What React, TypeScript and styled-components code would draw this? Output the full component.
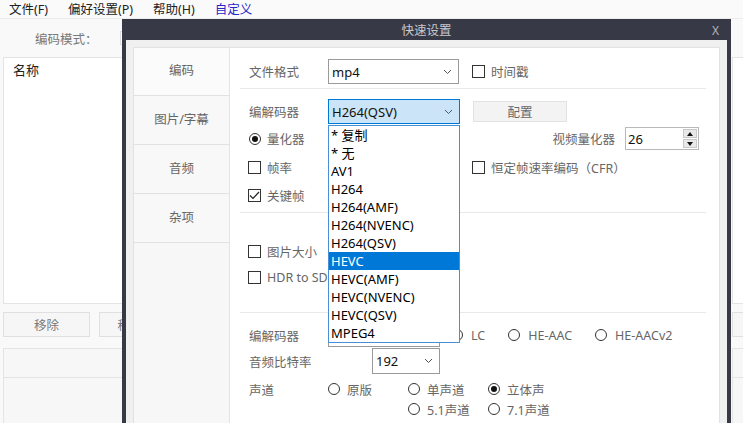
import React from "react";
import styled, { createGlobalStyle } from "styled-components";

const Global = createGlobalStyle`
  html, body { margin: 0; padding: 0; width: 743px; height: 423px; overflow: hidden; background: #f9f9f9; }
  body { font-family: "Noto Sans", "Noto Sans CJK SC", sans-serif; font-size: 12.5px; color: #333; }
  * { box-sizing: border-box; }
`;

const Page = styled.div`
  position: relative;
  width: 743px;
  height: 423px;
  overflow: hidden;
  background: #f9f9f9;
`;

const MenuBar = styled.div`
  display: flex;
  gap: 20px;
  height: 19px;
  align-items: center;
  padding-left: 9px;
  font-size: 12.5px;
  color: #222;
  background: #fafafa;
  border-bottom: 1px solid #ececec;
`;

const MenuItem = styled.span<{ $accent?: boolean }>`
  color: ${(p) => (p.$accent ? "#2626c8" : "#222")};
  line-height: 19px;
`;

const ModeRow = styled.div`
  display: flex;
  align-items: center;
  height: 38px;
  padding-left: 35px;
  gap: 22px;
  color: #777;
`;

const PinkBox = styled.span`
  width: 14px;
  height: 14px;
  border: 1px solid #ddd;
  background: #fff;
  color: #e0559a;
  font-size: 11px;
  line-height: 12px;
  text-align: center;
`;

const Workspace = styled.div`
  display: flex;
  gap: 4px;
  padding-left: 3px;
`;

const Column = styled.div<{ $w: number }>`
  width: ${(p) => p.$w}px;
  flex: none;
  display: flex;
  flex-direction: column;
`;

const ListPanel = styled.div`
  height: 247px;
  background: #fff;
  border: 1px solid #e4e4e4;
  padding: 2px 9px;
  color: #222;
  font-size: 13px;
`;

const ButtonRow = styled.div`
  display: flex;
  gap: 9px;
  margin-top: 8px;
  height: 25px;
`;

const AppButton = styled.div`
  width: 87px;
  height: 25px;
  border: 1px solid #e0e0e0;
  background: #f6f6f6;
  color: #777;
  display: flex;
  align-items: center;
  justify-content: center;
`;

const LowerPanel = styled.div`
  margin-top: 11px;
  height: 80px;
  border: 1px solid #e4e4e4;
  background: #f7f7f7;
`;

const LowerHeader = styled.div`
  height: 29px;
  border-bottom: 1px solid #e4e4e4;
`;

/* ---------- dialog ---------- */

const Dialog = styled.div`
  position: absolute;
  left: 122px;
  top: 19px;
  width: 609px;
  height: 410px;
  background: #383946;
  padding: 0 4px;
  display: flex;
  flex-direction: column;
`;

const TitleBar = styled.div`
  height: 21px;
  display: flex;
  align-items: center;
  justify-content: center;
  position: relative;
  color: #c9c9d1;
  font-size: 12.5px;
`;

const CloseX = styled.span`
  position: absolute;
  right: 8px;
  top: 3px;
  color: #b3b3bb;
  font-size: 12px;
`;

const DialogBody = styled.div`
  flex: 1;
  background: #f0f0f0;
  padding: 7px 7px 0 7px;
  display: flex;
`;

const Panel = styled.div`
  flex: 1;
  display: flex;
  background: #fff;
  border: 1px solid #e2e2e2;
  border-bottom: none;
`;

const TabColumn = styled.div`
  width: 96px;
  flex: none;
  background: #f7f7f7;
  border-right: 1px solid #e4e4e4;
  display: flex;
  flex-direction: column;
  gap: 1px;
`;

const Tab = styled.div<{ $active?: boolean }>`
  height: 48px;
  display: flex;
  align-items: center;
  justify-content: center;
  padding-bottom: 4px;
  color: #666;
  background: ${(p) => (p.$active ? "#fbfbfb" : "#f8f8f8")};
  border-bottom: 1px solid #e2e2e2;
`;

const Content = styled.div`
  flex: 1;
  padding: 0 13px 0 10px;
  display: flex;
  flex-direction: column;
`;

const Section = styled.div<{ $pt: number; $pb: number; $border?: boolean }>`
  padding: ${(p) => p.$pt}px 0 ${(p) => p.$pb}px 9px;
  border-bottom: ${(p) => (p.$border ? "1px solid #e8e8e8" : "none")};
  display: flex;
  flex-direction: column;
`;

const Row = styled.div<{ $h: number }>`
  height: ${(p) => p.$h}px;
  display: flex;
  align-items: center;
`;

const GridRow = styled.div<{ $h: number }>`
  height: ${(p) => p.$h}px;
  display: grid;
  grid-template-columns: 79px 131px 1fr;
  align-items: center;
`;

const Span2 = styled.div`
  grid-column: 1 / span 2;
  display: flex;
  align-items: center;
`;

const Cell3 = styled.div`
  padding-left: 14px;
  display: flex;
  align-items: center;
`;

const Label = styled.span<{ $w?: number }>`
  width: ${(p) => (p.$w ? `${p.$w}px` : "auto")};
  flex: none;
  color: #666;
  white-space: nowrap;
`;

const SelectBox = styled.div<{ $w: number; $h: number; $focus?: boolean }>`
  position: relative;
  width: ${(p) => p.$w}px;
  height: ${(p) => p.$h}px;
  border: 1px solid ${(p) => (p.$focus ? "#0078d7" : "#9a9a9a")};
  background: ${(p) => (p.$focus ? "#cce4f7" : "#fff")};
  display: flex;
  align-items: center;
  justify-content: space-between;
  padding: 0 6px 0 3px;
  color: #111;
  font-size: 13px;
`;

const Chevron = () => (
  <svg width="9" height="6" viewBox="0 0 9 6">
    <polyline points="1,1 4.5,4.5 8,1" fill="none" stroke="#555" strokeWidth="1" />
  </svg>
);

const DropList = styled.div`
  position: absolute;
  left: -1px;
  top: calc(100% + 2px);
  width: 132px;
  background: #fff;
  border: 1px solid #4a8fd6;
  z-index: 5;
  display: flex;
  flex-direction: column;
`;

const DropItem = styled.div<{ $sel?: boolean }>`
  height: 18px;
  line-height: 18px;
  padding-left: 2px;
  font-size: 13px;
  color: ${(p) => (p.$sel ? "#fff" : "#000")};
  background: ${(p) => (p.$sel ? "#0078d7" : "transparent")};
  white-space: nowrap;
`;

const ConfigButton = styled.div`
  width: 94px;
  height: 21px;
  border: 1px solid #e2e2e2;
  background: #f3f3f3;
  color: #666;
  display: flex;
  align-items: center;
  justify-content: center;
`;

const Option = styled.label<{ $gap?: number }>`
  display: inline-flex;
  align-items: center;
  gap: ${(p) => p.$gap ?? 7}px;
  color: #666;
  white-space: nowrap;
`;

const Box = styled.span`
  width: 13px;
  height: 13px;
  flex: none;
  margin-left: -1px;
  border: 1px solid #333;
  background: #fff;
  display: flex;
  align-items: center;
  justify-content: center;
`;

const Circle = styled.span`
  width: 12px;
  height: 12px;
  flex: none;
  border: 1px solid #333;
  border-radius: 50%;
  background: #fff;
  display: flex;
  align-items: center;
  justify-content: center;
`;

const Dot = styled.span`
  width: 6px;
  height: 6px;
  border-radius: 50%;
  background: #111;
`;

const Check = ({ label, checked }: { label: string; checked?: boolean }) => (
  <Option $gap={6}>
    <Box>
      {checked && (
        <svg width="11" height="9" viewBox="0 0 11 9">
          <polyline points="1,4.5 4,7.5 10,1" fill="none" stroke="#222" strokeWidth="1.2" />
        </svg>
      )}
    </Box>
    {label}
  </Option>
);

const Radio = ({ label, checked, gap }: { label: string; checked?: boolean; gap?: number }) => (
  <Option $gap={gap}>
    <Circle>{checked && <Dot />}</Circle>
    {label}
  </Option>
);

const SpinGroup = styled.div`
  display: flex;
  align-items: center;
  gap: 10px;
  margin-left: auto;
  margin-right: 7px;
`;

const SpinInput = styled.div`
  width: 74px;
  height: 23px;
  border: 1px solid #b9b9b9;
  background: #fff;
  display: flex;
  align-items: center;
  justify-content: space-between;
  padding: 1px 1px 1px 2px;
  color: #111;
  font-size: 13px;
`;

const SpinButtons = styled.div`
  width: 14px;
  height: 100%;
  display: flex;
  flex-direction: column;
  gap: 1px;
`;

const SpinBtn = styled.div`
  flex: 1;
  background: #e8e8e8;
  border: 1px solid #c8c8c8;
  display: flex;
  align-items: center;
  justify-content: center;
`;

const Tri = ({ up }: { up?: boolean }) => (
  <svg width="6" height="4" viewBox="0 0 6 4">
    <polygon points={up ? "0,4 3,0 6,4" : "0,0 3,4 6,0"} fill="#111" />
  </svg>
);

const RadioGroup = styled.div<{ $gap: number; $ml: number }>`
  display: flex;
  align-items: center;
  gap: ${(p) => p.$gap}px;
  margin-left: ${(p) => p.$ml}px;
`;

const ChannelGrid = styled.div`
  margin-top: 5px;
  display: grid;
  grid-template-columns: 79px 80px 80px 80px;
  grid-auto-rows: 20px;
  align-items: center;
`;

const GridCell = styled.div<{ $col: number }>`
  grid-column: ${(p) => p.$col};
  display: flex;
  align-items: center;
`;

const codecs = [
  "* 复制",
  "* 无",
  "AV1",
  "H264",
  "H264(AMF)",
  "H264(NVENC)",
  "H264(QSV)",
  "HEVC",
  "HEVC(AMF)",
  "HEVC(NVENC)",
  "HEVC(QSV)",
  "MPEG4",
];

export default function App() {
  return (
    <Page>
      <Global />
      <MenuBar>
        <MenuItem>文件(F)</MenuItem>
        <MenuItem>偏好设置(P)</MenuItem>
        <MenuItem>帮助(H)</MenuItem>
        <MenuItem $accent>自定义</MenuItem>
      </MenuBar>
      <ModeRow>
        <span>编码模式：</span>
        <PinkBox>✓</PinkBox>
      </ModeRow>
      <Workspace>
        <Column $w={725}>
          <ListPanel>名称</ListPanel>
          <ButtonRow>
            <AppButton>移除</AppButton>
            <AppButton>移到顶部</AppButton>
          </ButtonRow>
          <LowerPanel>
            <LowerHeader />
          </LowerPanel>
        </Column>
        <Column $w={40}>
          <ListPanel />
          <ButtonRow>
            <AppButton />
          </ButtonRow>
          <LowerPanel>
            <LowerHeader />
          </LowerPanel>
        </Column>
      </Workspace>

      <Dialog>
        <TitleBar>
          快速设置
          <CloseX>X</CloseX>
        </TitleBar>
        <DialogBody>
          <Panel>
            <TabColumn>
              <Tab $active>编码</Tab>
              <Tab>图片/字幕</Tab>
              <Tab>音频</Tab>
              <Tab>杂项</Tab>
            </TabColumn>
            <Content>
              <Section $pt={11} $pb={4} $border>
                <GridRow $h={25}>
                  <Label>文件格式</Label>
                  <SelectBox $w={131} $h={25}>
                    mp4
                    <Chevron />
                  </SelectBox>
                  <Cell3>
                    <Check label="时间戳" />
                  </Cell3>
                </GridRow>
              </Section>

              <Section $pt={10} $pb={3} $border>
                <GridRow $h={25}>
                  <Label>编解码器</Label>
                  <SelectBox $w={132} $h={25} $focus>
                    H264(QSV)
                    <Chevron />
                    <DropList>
                      {codecs.map((c) => (
                        <DropItem key={c} $sel={c === "HEVC"}>
                          {c}
                        </DropItem>
                      ))}
                    </DropList>
                  </SelectBox>
                  <Cell3>
                    <ConfigButton>配置</ConfigButton>
                  </Cell3>
                </GridRow>
                <Row $h={29}>
                  <Radio label="量化器" checked gap={6} />
                  <SpinGroup>
                    <Label>视频量化器</Label>
                    <SpinInput>
                      26
                      <SpinButtons>
                        <SpinBtn>
                          <Tri up />
                        </SpinBtn>
                        <SpinBtn>
                          <Tri />
                        </SpinBtn>
                      </SpinButtons>
                    </SpinInput>
                  </SpinGroup>
                </Row>
                <GridRow $h={28}>
                  <Span2>
                    <Check label="帧率" />
                  </Span2>
                  <Cell3>
                    <Check label="恒定帧速率编码（CFR）" />
                  </Cell3>
                </GridRow>
                <Row $h={28}>
                  <Check label="关键帧" checked />
                </Row>
              </Section>

              <Section $pt={25} $pb={22} $border>
                <Row $h={26}>
                  <Check label="图片大小" />
                </Row>
                <Row $h={26}>
                  <Check label="HDR to SDR" />
                </Row>
              </Section>

              <Section $pt={9} $pb={0}>
                <Row $h={26}>
                  <Label $w={79}>编解码器</Label>
                  <SelectBox $w={112} $h={24}>
                    <span />
                    <Chevron />
                  </SelectBox>
                  <RadioGroup $gap={23} $ml={11}>
                    <Radio label="LC" checked gap={8} />
                    <Radio label="HE-AAC" gap={8} />
                    <Radio label="HE-AACv2" gap={8} />
                  </RadioGroup>
                </Row>
                <Row $h={26}>
                  <Label $w={123}>音频比特率</Label>
                  <SelectBox $w={68} $h={26}>
                    192
                    <Chevron />
                  </SelectBox>
                </Row>
                <ChannelGrid>
                  <GridCell $col={1}>
                    <Label>声道</Label>
                  </GridCell>
                  <GridCell $col={2}>
                    <Radio label="原版" />
                  </GridCell>
                  <GridCell $col={3}>
                    <Radio label="单声道" />
                  </GridCell>
                  <GridCell $col={4}>
                    <Radio label="立体声" checked />
                  </GridCell>
                  <GridCell $col={3}>
                    <Radio label="5.1声道" />
                  </GridCell>
                  <GridCell $col={4}>
                    <Radio label="7.1声道" />
                  </GridCell>
                </ChannelGrid>
              </Section>
            </Content>
          </Panel>
        </DialogBody>
      </Dialog>
    </Page>
  );
}
